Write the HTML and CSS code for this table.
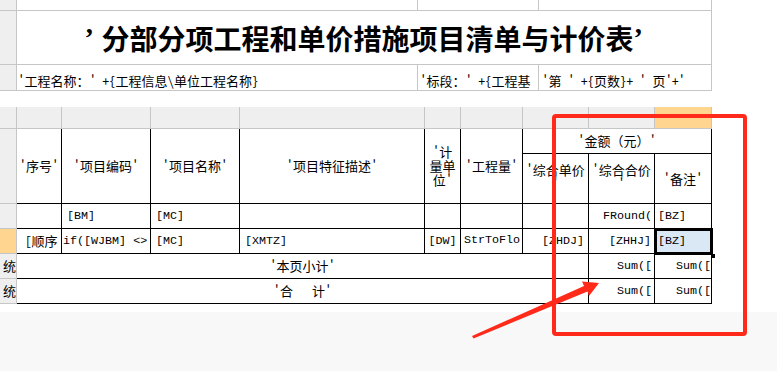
FILE: index.html
```html
<!DOCTYPE html>
<html lang="zh-CN">
<head>
<meta charset="utf-8">
<title>分部分项工程和单价措施项目清单与计价表</title>
<link rel="stylesheet" href="styles.css">
</head>
<body>
<div class="page">
  <div class="sheet">
    <div class="top">
      <div class="c rh"></div><div class="c"></div><div class="c"></div><div class="c"></div>
      <div class="c rh"></div><div class="c title span3"><span class="q ql">’</span>分部分项工程和单价措施项目清单与计价表<span class="q">’</span></div>
      <div class="c rh"></div>
      <div class="c info pl1">'工程名称：' +{工程信息\单位工程名称}</div>
      <div class="c info pl2">'标段：' +{工程基</div>
      <div class="c info pl3">'第 ' +{页数}+ ' 页'+'</div>
    </div>
    <div class="gap"></div>
    <div class="grid">
      <div class="c rh"></div>
      <div class="c colh"></div><div class="c colh"></div><div class="c colh"></div><div class="c colh"></div>
      <div class="c colh"></div><div class="c colh"></div><div class="c colh"></div><div class="c colh"></div>
      <div class="c colh sel"></div>

      <div class="c rh s2r"></div>
      <div class="c k s2r ctr">'序号'</div>
      <div class="c k s2r ctr">'项目编码'</div>
      <div class="c k s2r ctr">'项目名称'</div>
      <div class="c k s2r ctr">'项目特征描述'</div>
      <div class="c k s2r ctr"><span class="ml">'计<br>量单<br>位'</span></div>
      <div class="c k s2r ctr">'工程量'</div>
      <div class="c k s3c ctr">'金额（元）'</div>
      <div class="c k ctr"><span class="ml sub">'综合单价<br>'</span></div>
      <div class="c k ctr"><span class="ml sub">'综合合价<br>'</span></div>
      <div class="c k ctr">'备注'</div>

      <div class="c rh"></div>
      <div class="c k"></div>
      <div class="c k m pl5">[BM]</div>
      <div class="c k m pl5">[MC]</div>
      <div class="c k"></div>
      <div class="c k"></div>
      <div class="c k"></div>
      <div class="c k"></div>
      <div class="c k m rt pr2">FRound(</div>
      <div class="c k m pl3">[BZ]</div>

      <div class="c rh sel"></div>
      <div class="c k pl8">[顺序</div>
      <div class="c k m pl1">if([WJBM] &lt;&gt;</div>
      <div class="c k m pl5">[MC]</div>
      <div class="c k m pl5">[XMTZ]</div>
      <div class="c k m ctr">[DW]</div>
      <div class="c k m pl3 hi">StrToFlo</div>
      <div class="c k m rt pr4">[ZHDJ]</div>
      <div class="c k m rt pr3">[ZHHJ]</div>
      <div class="c k m pl3 cur">[BZ]</div>

      <div class="c rh rt">统</div>
      <div class="c k s7c ctr">'本页小计'</div>
      <div class="c k m rt pr2">Sum([</div>
      <div class="c k m rt">Sum([</div>

      <div class="c rh rt">统</div>
      <div class="c k s7c ctr">'合<span class="wide"></span>计'</div>
      <div class="c k m rt pr2">Sum([</div>
      <div class="c k m rt">Sum([</div>
    </div>
  </div>
  <div class="floor"></div>

  <svg class="annot" width="777" height="371" viewBox="0 0 777 371" aria-hidden="true">
    <rect x="554" y="116" width="191" height="218" rx="2" ry="2" fill="none" stroke="#ff2a1a" stroke-width="4"/>
    <polygon points="472,336 584,286 582,281.5 599,283 589,296 587.5,291.5 473.5,338.5" fill="#ff2a1a"/>
  </svg>
</div>
</body>
</html>
```

FILE: styles.css
```css
* {
  box-sizing: border-box;
  margin: 0;
  padding: 0;
}

body {
  width: 777px;
  height: 371px;
  overflow: hidden;
  background: #ffffff;
  color: #000000;
  font-family: "Noto Sans Mono CJK SC", "Noto Sans CJK SC", "Noto Sans", sans-serif;
  font-size: 13px;
}

.page {
  position: relative;
  height: 371px;
  display: flex;
  flex-direction: column;
}

.sheet {
  width: 712px;
}

.top {
  display: grid;
  grid-template-columns: 17px 401px 121px 173px;
  grid-template-rows: 11px 54px 26px;
}

.gap {
  height: 16px;
}

.grid {
  display: grid;
  grid-template-columns: 17px 45px 89px 89px 185px 36px 62px 66px 66px 57px;
  grid-template-rows: 22px 25px 50px 25px 25px 25px 25px;
}

.c {
  display: flex;
  align-items: center;
  min-width: 0;
  overflow: hidden;
  white-space: nowrap;
  line-height: 14px;
  border-right: 1px solid #c6c6c6;
  border-bottom: 1px solid #c6c6c6;
}

.rh {
  background: #efefef;
}

.colh {
  background: #efefef;
}

.sel {
  background: #ffd58f;
}

.k {
  border-right-color: #000000;
  border-bottom-color: #000000;
}

.span3 {
  grid-column: span 3;
}

.s2r {
  grid-row: span 2;
}

.s3c {
  grid-column: span 3;
}

.s7c {
  grid-column: span 7;
}

.ctr {
  justify-content: center;
  text-align: center;
}

.rt {
  justify-content: flex-end;
}

.title {
  justify-content: center;
  font-family: "Noto Sans CJK SC", sans-serif;
  font-size: 28px;
  font-weight: 700;
  line-height: 30px;
  padding-top: 1px;
  padding-left: 2px;
}

.q {
  display: inline-block;
  width: 12px;
  font-family: "Liberation Serif", serif;
  font-weight: 700;
  text-align: left;
}

.ql {
  width: 17px;
}

.info {
  align-items: flex-end;
  padding-bottom: 2px;
}

.m {
  font-family: "Liberation Mono", "Noto Sans Mono CJK SC", monospace;
  font-size: 11.7px;
}

.pl1 { padding-left: 1px; }
.pl2 { padding-left: 2px; }
.pl3 { padding-left: 3px; }
.pl5 { padding-left: 5px; }
.pl8 { padding-left: 8px; }
.pr2 { padding-right: 2px; }
.pr3 { padding-right: 3px; }
.pr4 { padding-right: 4px; }

.hi {
  padding-bottom: 3px;
}

.ml {
  display: block;
  white-space: normal;
  line-height: 14px;
  text-align: center;
}

.sub {
  line-height: 14px;
  margin-bottom: 4px;
}

.wide {
  display: inline-block;
  width: 19px;
}

.cur {
  position: relative;
  overflow: visible;
  background: #dae8f6;
}

.cur::after {
  content: "";
  position: absolute;
  left: -1px;
  top: -1px;
  right: -2px;
  bottom: -2px;
  border: 3px solid #000000;
}

.cur::before {
  content: "";
  position: absolute;
  right: -4px;
  bottom: -5px;
  width: 4px;
  height: 4px;
  background: #000000;
  z-index: 1;
}

.floor {
  flex: 1;
  margin-top: 8px;
  background: #f8f8f8;
}

.annot {
  position: absolute;
  left: 0;
  top: 0;
  pointer-events: none;
}
```
